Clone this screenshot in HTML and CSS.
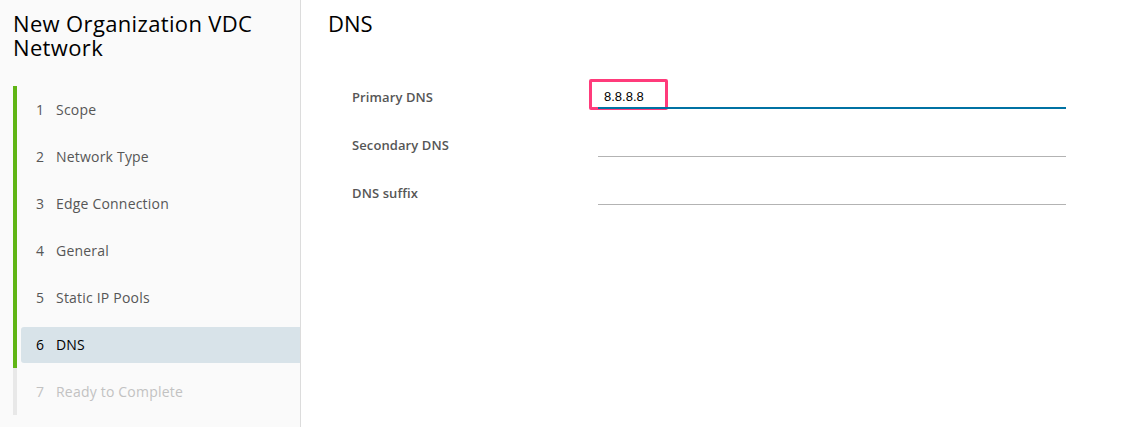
FILE: index.html
```html
<!DOCTYPE html>
<html>
<head>
<meta charset="utf-8">
<link rel="stylesheet" href="styles.css">
</head>
<body>
<div class="wizard">
  <aside class="sidebar">
    <h1 class="title">New Organization VDC Network</h1>
    <ol class="steps">
      <li class="step done"><div class="step-inner"><span class="num">1</span>Scope</div></li>
      <li class="step done"><div class="step-inner"><span class="num">2</span>Network Type</div></li>
      <li class="step done"><div class="step-inner"><span class="num">3</span>Edge Connection</div></li>
      <li class="step done"><div class="step-inner"><span class="num">4</span>General</div></li>
      <li class="step done"><div class="step-inner"><span class="num">5</span>Static IP Pools</div></li>
      <li class="step current"><div class="step-inner"><span class="num">6</span>DNS</div></li>
      <li class="step todo"><div class="step-inner"><span class="num">7</span>Ready to Complete</div></li>
    </ol>
  </aside>
  <main class="content">
    <h2 class="heading">DNS</h2>
    <form class="form">
      <div class="row">
        <label class="label">Primary DNS</label>
        <div class="field focused">
          <input class="input" type="text" value="8.8.8.8" readonly>
          <span class="highlight"></span>
        </div>
      </div>
      <div class="row">
        <label class="label">Secondary DNS</label>
        <div class="field"><input class="input" type="text" readonly></div>
      </div>
      <div class="row">
        <label class="label">DNS suffix</label>
        <div class="field"><input class="input" type="text" readonly></div>
      </div>
    </form>
  </main>
</div>
</body>
</html>
```
FILE: styles.css
```css
html, body {
  margin: 0;
  padding: 0;
  background: #ffffff;
}
body {
  font-family: "Open Sans", "Lato", sans-serif;
  color: #565656;
}
.wizard {
  display: flex;
  height: 427px;
}
.sidebar {
  flex: none;
  width: 301px;
  box-sizing: border-box;
  background: #fafafa;
  border-right: 1px solid #dcdcdc;
  padding: 11px 0 0 13px;
}
.title {
  margin: 0;
  font-size: 22px;
  line-height: 24px;
  font-weight: 400;
  letter-spacing: 0.35px;
  color: #000;
}
.steps {
  list-style: none;
  margin: 27px 0 0 0;
  padding: 0;
}
.step {
  border-left: 4px solid #60b515;
  padding: 6px 0 5px 0;
  font-size: 14px;
}
.step.todo {
  border-left-color: #e8e8e8;
}
.step-inner {
  margin-left: 4px;
  height: 36px;
  box-sizing: border-box;
  display: flex;
  align-items: center;
  padding: 0 0 2px 15px;
  border-radius: 3px 0 0 3px;
  color: #565656;
  letter-spacing: 0.2px;
}
.step.current .step-inner {
  background: #d8e3e9;
  color: #000;
}
.step.todo .step-inner {
  color: #c2c2c2;
}
.num {
  width: 20px;
  flex: none;
}
.content {
  flex: 1;
  padding: 11px 0 0 27px;
}
.heading {
  margin: 0;
  font-size: 22px;
  line-height: 24px;
  font-weight: 400;
  color: #000;
}
.form {
  margin: 38px 0 0 24px;
}
.row {
  display: flex;
  align-items: center;
  height: 48px;
}
.label {
  width: 246px;
  flex: none;
  font-size: 13px;
  font-weight: 600;
  color: #565656;
  letter-spacing: 0.1px;
}
.field {
  position: relative;
  width: 468px;
}
.input {
  position: relative;
  z-index: 1;
  display: block;
  width: 100%;
  box-sizing: border-box;
  height: 23px;
  border: none;
  border-bottom: 1px solid #b3b3b3;
  background: transparent;
  padding: 0 6px;
  font-family: "Liberation Sans", Arial, sans-serif;
  font-size: 13px;
  color: #000;
  outline: none;
}
.focused .input {
  height: 24px;
  border-bottom: 2px solid #0072a3;
}
.highlight {
  position: absolute;
  z-index: 0;
  left: -9px;
  top: -6px;
  width: 79px;
  height: 31px;
  box-sizing: border-box;
  border: 3px solid #ff3b7b;
  border-radius: 2px;
}
```
